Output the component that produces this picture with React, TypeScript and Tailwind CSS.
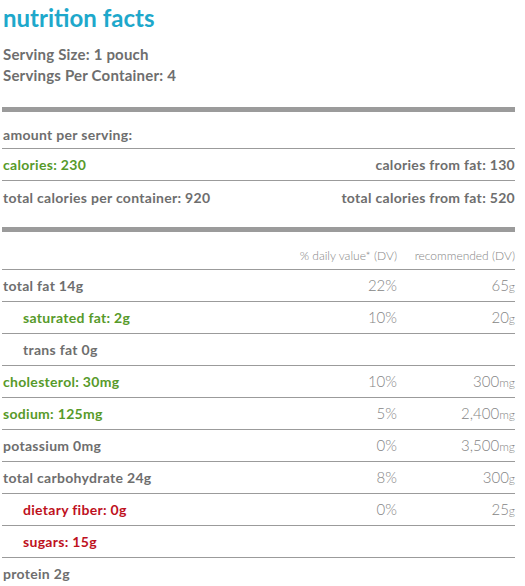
type Tone = 'gray' | 'green' | 'red';

const TONE: Record<Tone, string> = {
  gray: 'text-[#6e6e6e]',
  green: 'text-[#579a2a]',
  red: 'text-[#be111d]',
};

type Nutrient = {
  label: string;
  tone: Tone;
  indent?: boolean;
  dv?: string;
  rec?: string;
  unit?: string;
  last?: boolean;
};

const NUTRIENTS: Nutrient[] = [
  { label: 'total fat 14g', tone: 'gray', dv: '22%', rec: '65', unit: 'g' },
  { label: 'saturated fat: 2g', tone: 'green', indent: true, dv: '10%', rec: '20', unit: 'g' },
  { label: 'trans fat 0g', tone: 'gray', indent: true },
  { label: 'cholesterol: 30mg', tone: 'green', dv: '10%', rec: '300', unit: 'mg' },
  { label: 'sodium: 125mg', tone: 'green', dv: '5%', rec: '2,400', unit: 'mg' },
  { label: 'potassium 0mg', tone: 'gray', dv: '0%', rec: '3,500', unit: 'mg' },
  { label: 'total carbohydrate 24g', tone: 'gray', dv: '8%', rec: '300', unit: 'g' },
  { label: 'dietary fiber: 0g', tone: 'red', indent: true, dv: '0%', rec: '25', unit: 'g' },
  { label: 'sugars: 15g', tone: 'red', indent: true },
  { label: 'protein 2g', tone: 'gray', last: true },
];

export default function App() {
  return (
    <div className="min-h-[586px] bg-white font-['Lato',sans-serif]">
      <div className="ml-[2px] w-[513px]">
        <h1 className="pl-px pt-[3px] text-[24px] leading-[30px] font-bold text-[#1ea8cb]">
          nutrition facts
        </h1>

        <div className="mt-[11px] pl-px text-[15px] leading-[21px] font-bold tracking-[0.2px] text-[#6e6e6e]">
          <div>Serving Size: 1 pouch</div>
          <div>Servings Per Container: 4</div>
        </div>

        <div className="mt-[21px] h-[5px] bg-[#9b9b9b]" />

        <div className="flex h-[37px] items-center border-b border-[#9b9b9b] pt-[9px] pl-px text-[14px] font-bold tracking-[0.3px] text-[#6e6e6e]">
          amount per serving:
        </div>
        <div className="flex h-[32px] items-center justify-between border-b border-[#9b9b9b] pl-px text-[14px] font-bold tracking-[0.3px]">
          <span className={TONE.green}>calories: 230</span>
          <span className={TONE.gray}>calories from fat: 130</span>
        </div>
        <div className="flex h-[32px] items-center justify-between pl-px text-[14px] font-bold tracking-[0.3px] text-[#6e6e6e]">
          <span>total calories per container: 920</span>
          <span>total calories from fat: 520</span>
        </div>

        <div className="mt-[14px] h-[5px] bg-[#9b9b9b]" />

        <div className="flex h-[38px] items-center border-b border-[#9b9b9b] pt-[10px] text-[12px] font-light text-[#858585]">
          <span className="flex-1" />
          <span className="w-[120px] text-right">% daily value* (DV)</span>
          <span className="w-[118px] text-right">recommended (DV)</span>
        </div>

        {NUTRIENTS.map((n) => (
          <div
            key={n.label}
            className={
              'flex h-[32px] items-center border-b ' +
              (n.last ? 'border-[#e4e4e4]' : 'border-[#9b9b9b]')
            }
          >
            <span
              className={
                'flex-1 text-[14px] font-bold tracking-[0.3px] ' +
                TONE[n.tone] +
                (n.indent ? ' pl-[21px]' : ' pl-px')
              }
            >
              {n.label}
            </span>
            <span className="w-[120px] text-right text-[15px] font-light text-[#858585]">
              {n.dv}
            </span>
            <span className="w-[118px] text-right text-[15px] font-light text-[#858585]">
              {n.rec}
              {n.unit ? <span className="text-[12px]">{n.unit}</span> : null}
            </span>
          </div>
        ))}
      </div>
    </div>
  );
}
